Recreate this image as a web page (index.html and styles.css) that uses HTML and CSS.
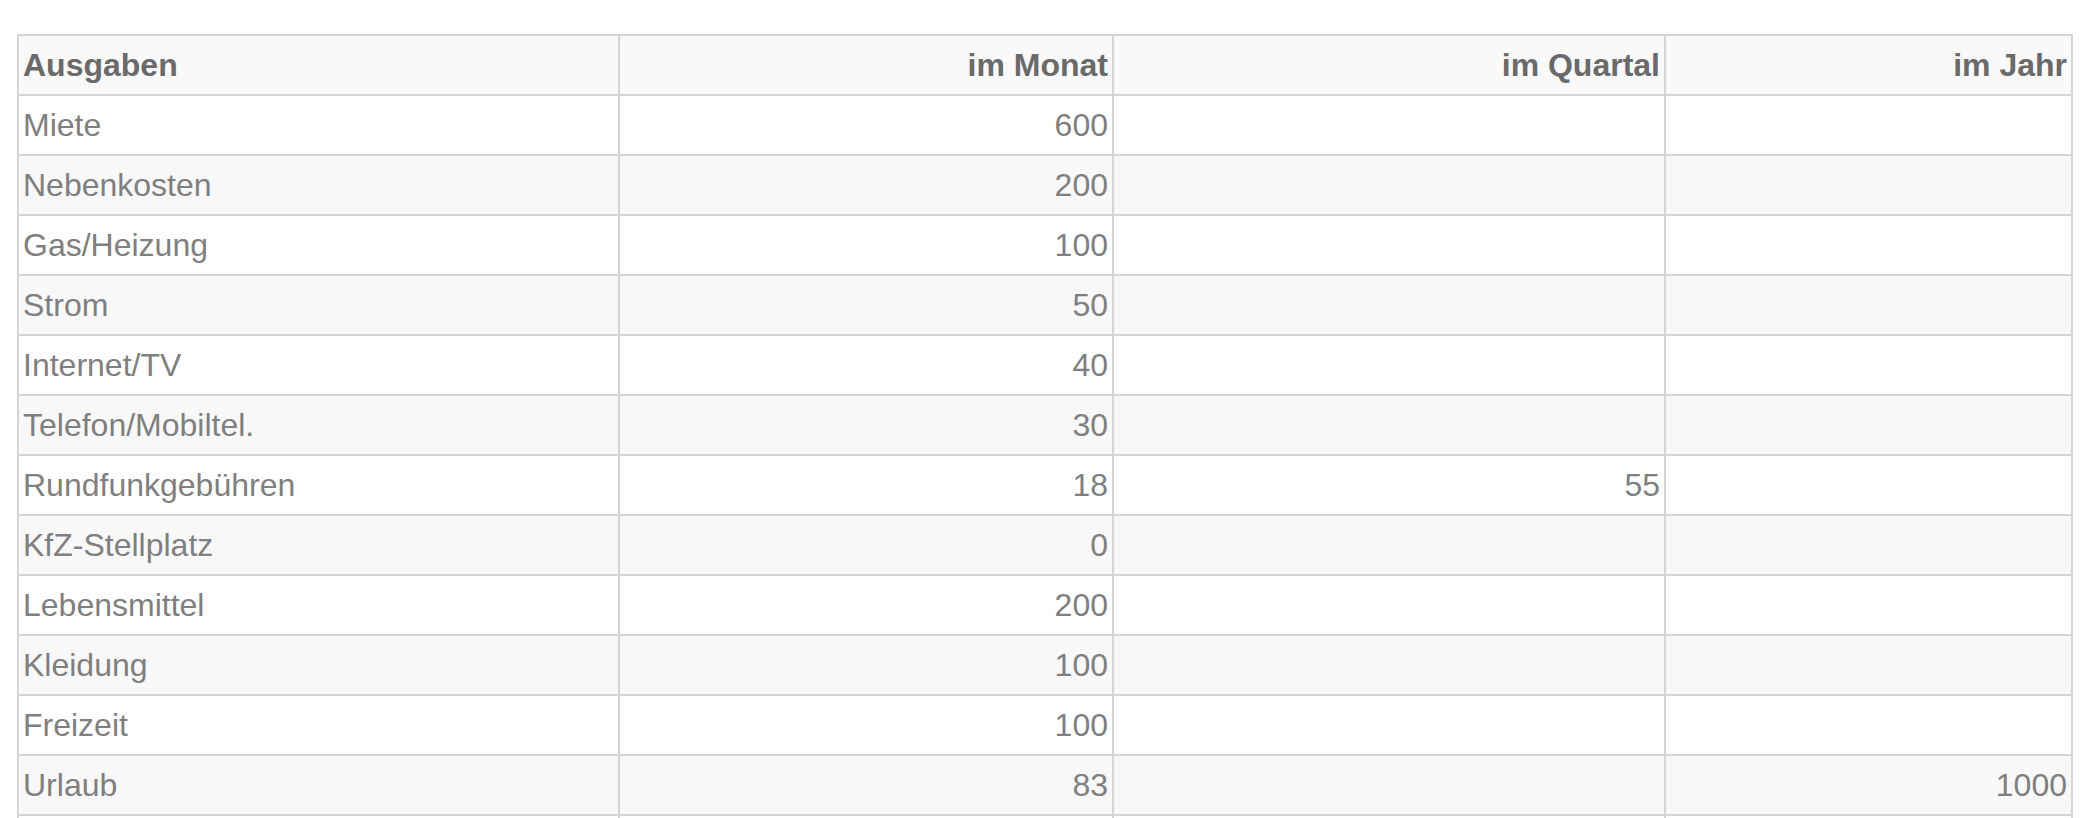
FILE: index.html
```html
<!DOCTYPE html>
<html lang="de">
<head>
<meta charset="utf-8">
<title>Ausgaben</title>
<link rel="stylesheet" href="styles.css">
</head>
<body>
<div class="page">
<table class="budget">
  <thead>
    <tr>
      <th class="c-name">Ausgaben</th>
      <th class="c-month num">im Monat</th>
      <th class="c-quarter num">im Quartal</th>
      <th class="c-year num">im Jahr</th>
    </tr>
  </thead>
  <tbody>
    <tr><td>Miete</td><td class="num">600</td><td class="num"></td><td class="num"></td></tr>
    <tr><td>Nebenkosten</td><td class="num">200</td><td class="num"></td><td class="num"></td></tr>
    <tr><td>Gas/Heizung</td><td class="num">100</td><td class="num"></td><td class="num"></td></tr>
    <tr><td>Strom</td><td class="num">50</td><td class="num"></td><td class="num"></td></tr>
    <tr><td>Internet/TV</td><td class="num">40</td><td class="num"></td><td class="num"></td></tr>
    <tr><td>Telefon/Mobiltel.</td><td class="num">30</td><td class="num"></td><td class="num"></td></tr>
    <tr><td>Rundfunkgebühren</td><td class="num">18</td><td class="num">55</td><td class="num"></td></tr>
    <tr><td>KfZ-Stellplatz</td><td class="num">0</td><td class="num"></td><td class="num"></td></tr>
    <tr><td>Lebensmittel</td><td class="num">200</td><td class="num"></td><td class="num"></td></tr>
    <tr><td>Kleidung</td><td class="num">100</td><td class="num"></td><td class="num"></td></tr>
    <tr><td>Freizeit</td><td class="num">100</td><td class="num"></td><td class="num"></td></tr>
    <tr><td>Urlaub</td><td class="num">83</td><td class="num"></td><td class="num">1000</td></tr>
    <tr><td>&nbsp;</td><td class="num"></td><td class="num"></td><td class="num"></td></tr>
  </tbody>
</table>
</div>
</body>
</html>
```

FILE: styles.css
```css
html, body {
  margin: 0;
  padding: 0;
  background: #ffffff;
}

.page {
  padding: 34px 17px 0 17px;
}

.budget {
  width: 2056px;
  table-layout: fixed;
  border-collapse: separate;
  border-spacing: 0;
  border-top: 2px solid #d5d5d5;
  border-left: 2px solid #d5d5d5;
  font-family: "Liberation Sans", Arial, Helvetica, sans-serif;
  font-size: 32px;
  color: #7f7f7f;
}

.budget th,
.budget td {
  box-sizing: border-box;
  height: 60px;
  padding: 11px 4px 11px 4px;
  line-height: 36px;
  border-right: 2px solid #d5d5d5;
  border-bottom: 2px solid #d5d5d5;
  text-align: left;
  vertical-align: middle;
  white-space: nowrap;
  overflow: hidden;
}

.budget th {
  font-weight: bold;
  color: #6a6a6a;
  background: #f9f9f9;
}

.budget .c-name { width: 601px; }
.budget .c-month { width: 494px; }
.budget .c-quarter { width: 552px; }
.budget .c-year { width: 407px; }

.budget .num {
  text-align: right;
}

.budget tbody tr:nth-child(even) td {
  background: #f8f8f8;
}
```
